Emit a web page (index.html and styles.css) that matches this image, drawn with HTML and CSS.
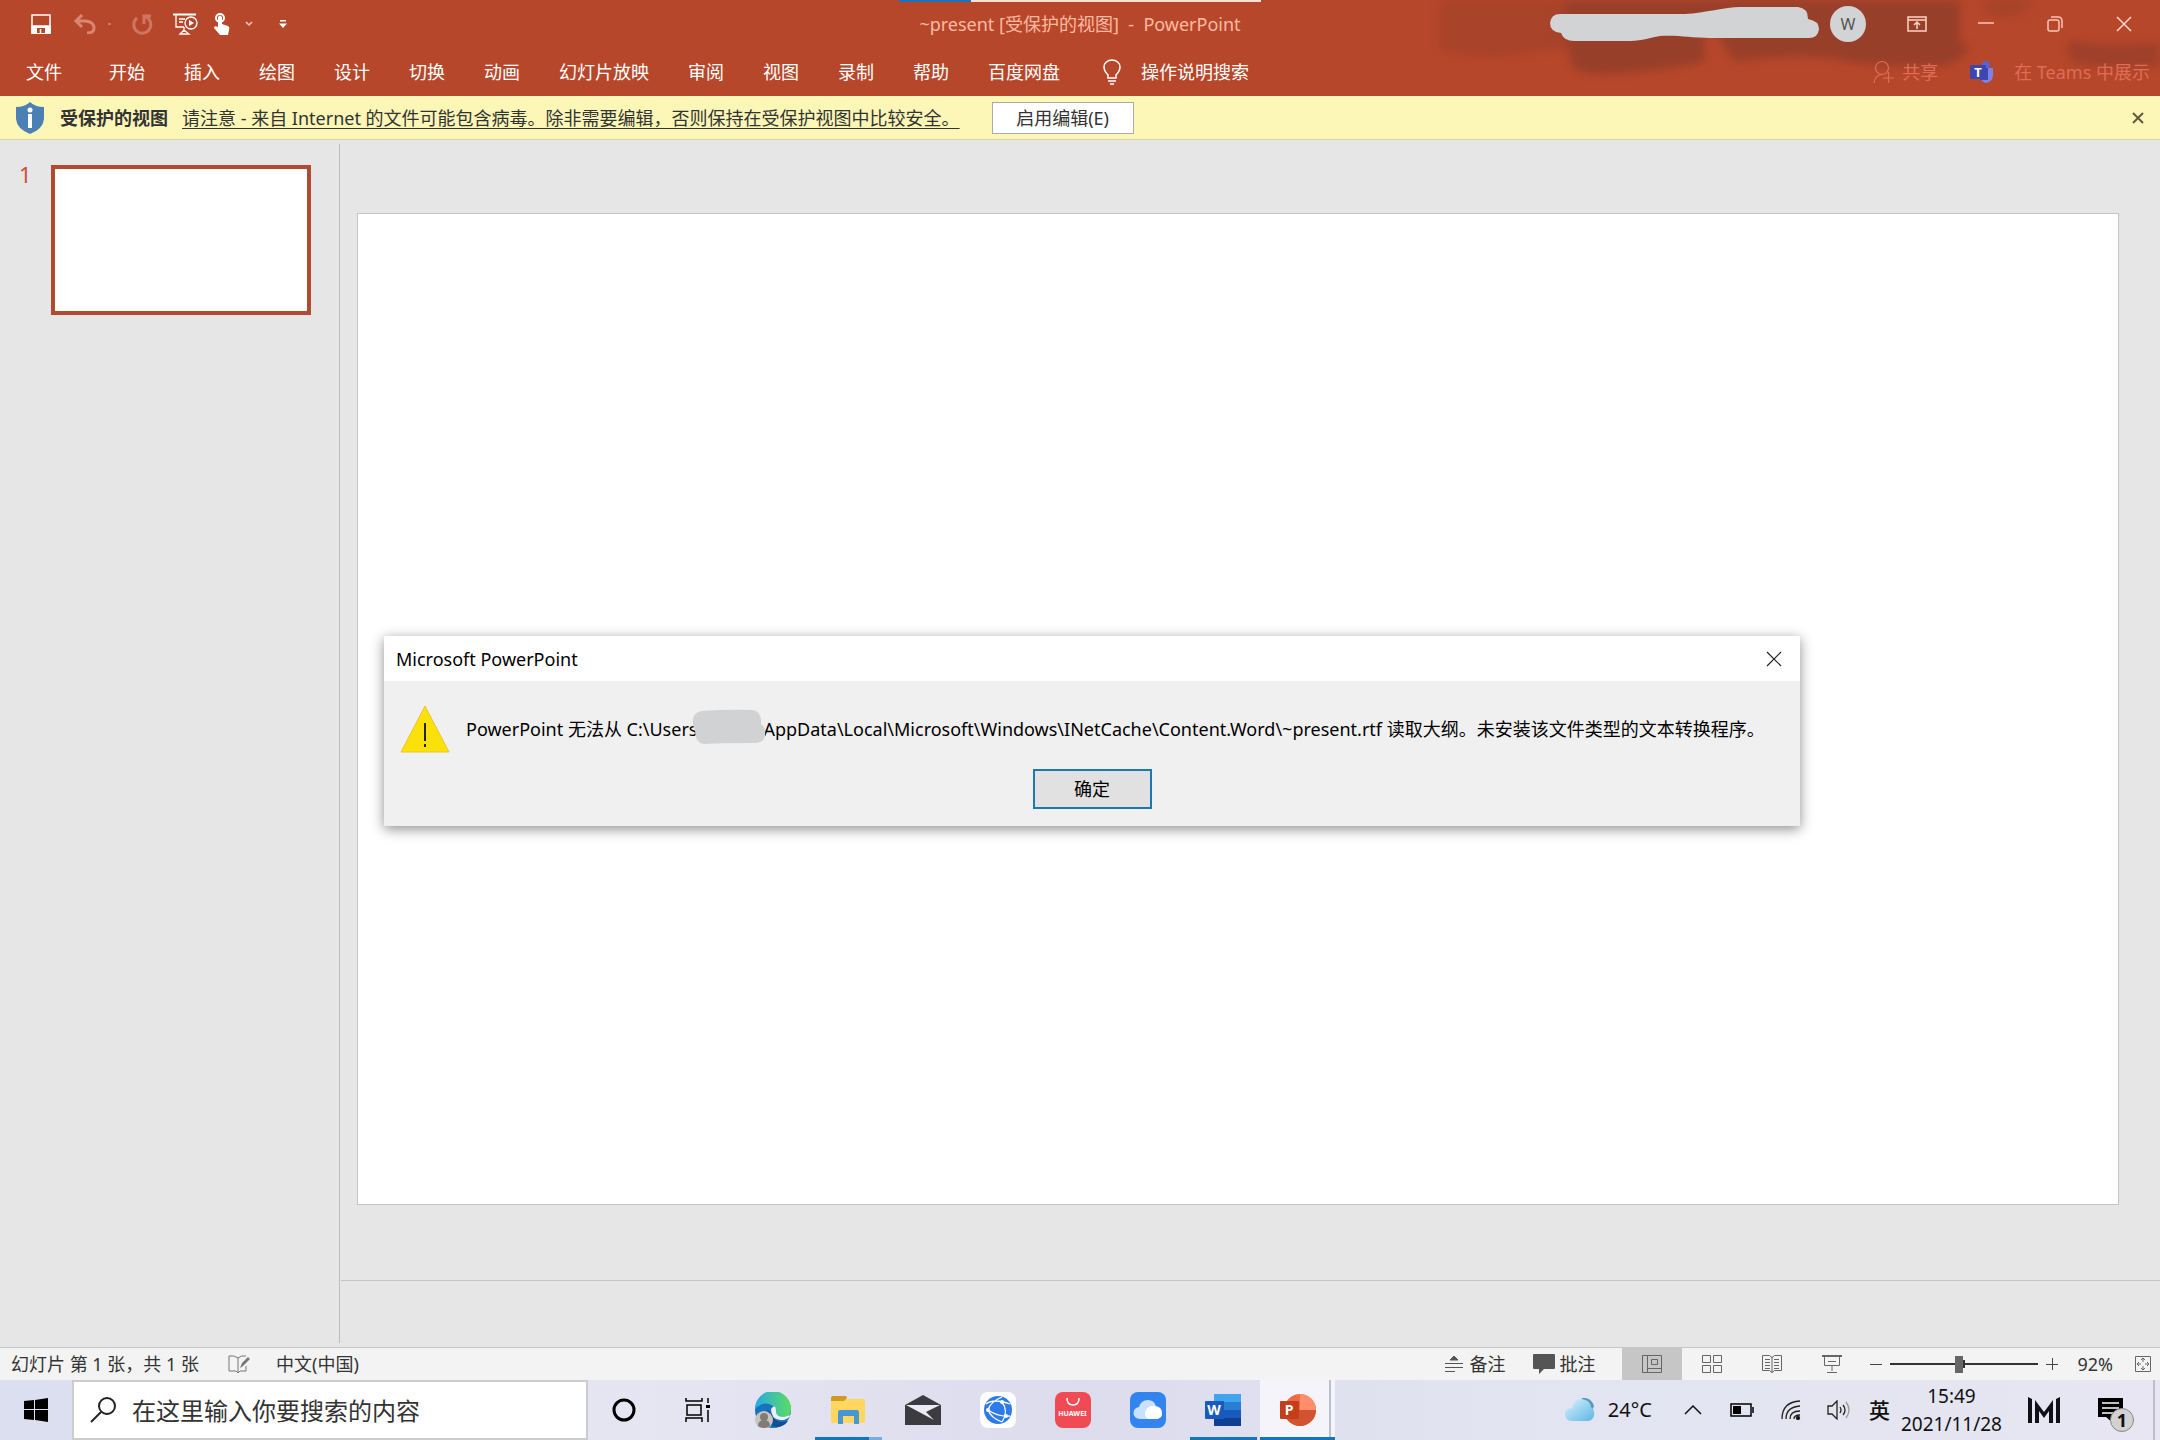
FILE: index.html
```
<!DOCTYPE html>
<html lang="zh-CN">
<head>
    <meta charset="UTF-8">
    <meta name="viewport" content="width=device-width, initial-scale=1.0">
    <title>~present [受保护的视图] - PowerPoint</title>
    <link rel="stylesheet" href="styles.css">
</head>
<body>
    <header class="ribbon">
        <svg class="ribbon-art" width="720" height="96" viewBox="0 0 720 96" aria-hidden="true">
            <g fill="#983f2a">
                <path d="M0 0h105v50q-60 15-105 0z" opacity="0.45"/>
                <path d="M105 0h30v50h-30z" opacity="0.5"/>
                <path d="M125 0h140v62q-50 10-95 12-35 2-40-12z"/>
                <path d="M255 0h265v42q12 4 8 8-13 18-38 16-60 2-100-8-50-4-95 4z"/>
                <path d="M540 0h55l-15 16h-30z" opacity="0.5"/>
                <path d="M630 40q35 8 90 2v24q-50 4-85-3-12-10-5-23z" opacity="0.8"/>
            </g>
        </svg>
        <div class="top-strip"><span></span></div>
        <div class="titlebar">
            <div class="quick">
                <button class="save" aria-label="保存"><svg width="20" height="20" viewBox="0 0 20 20" fill="none" stroke="#fff" stroke-width="1.500"><path d="M1 1h18v18H1z"/><path d="M1 12h18v7H1z" fill="#fff"/><path d="M6 14h8v5H6z" fill="#b7472a" stroke="none"/><path d="M9.500 15v4"/></svg></button>
                <button class="undo" aria-label="撤销"><svg width="24" height="20" viewBox="0 0 24 20" fill="none" stroke="#d98672" stroke-width="3"><path d="M9 1L3 7l6 6M3 7h10q8 1 8 7 0 5-7 5"/></svg></button>
                <i class="dot"></i>
                <button class="redo" aria-label="恢复"><svg width="22" height="22" viewBox="0 0 22 22" fill="none" stroke="#d07562" stroke-width="3"><path d="M6 5a8.500 8.500 0 1 0 9-1M13 11V3h7"/></svg></button>
                <button class="play" aria-label="从头开始"><svg width="25" height="22" viewBox="0 0 25 22" fill="none" stroke="#fff" stroke-width="1.300"><path d="M0 1.500h23" stroke-width="2"/><path d="M3 2v12h8M6 6h6M6 9h4M11 14v5M7 21l4-4 5 4z"/><circle cx="18" cy="10" r="6"/><path d="M16 7l5 3-5 3z" fill="#fff" stroke="none"/></svg></button>
                <button class="touch" aria-label="触摸模式"><svg width="17" height="22" viewBox="0 0 17 22"><circle cx="7" cy="5" r="4" fill="none" stroke="#fff" stroke-width="2"/><path d="M5 4q2-3 4 0v7l6 2q2 1 1 4l-1 5H7l-6-7q0-3 4-1z" fill="#fff"/></svg></button>
                <button class="chev" aria-label="模式选项"><svg width="8" height="6" viewBox="0 0 8 6" fill="none" stroke="#ffc9b6" stroke-width="1.500"><path d="M1 1l3 3 3-3"/></svg></button>
                <button class="more" aria-label="自定义快速访问工具栏"><svg width="8" height="8" viewBox="0 0 8 8" fill="#fff"><path d="M1 0h6v1.500H1zM0 3.500h8L4 8z"/></svg></button>
            </div>
            <h1>~present [受保护的视图]&nbsp; -&nbsp; PowerPoint</h1>
            <div class="window-tools">
                <svg class="account" width="270" height="34" viewBox="0 0 270 34" aria-hidden="true"><path d="M10 7h125c20-1 40-7 55-7h58q10 1 10 12 11 2 11 10-1 9-10 9H160c-20 0-30-3-50-2-15 3-20 5-35 5H24q-10 0-13-8Q0 25 0 16q1-9 10-9z" fill="#d2d3d5"/></svg>
                <span class="avatar">W</span>
                <button aria-label="功能区显示选项"><svg width="20" height="16" viewBox="0 0 20 16" fill="none" stroke="#ffd3c6" stroke-width="1.500"><path d="M1 1h18v14H1zM1 4h18M10 13V6M7 9l3-3 3 3"/></svg></button>
                <button aria-label="最小化"><svg width="16" height="16" viewBox="0 0 16 16" stroke="#ffc3b4" stroke-width="1.500"><path d="M0 7h16"/></svg></button>
                <button aria-label="还原"><svg width="16" height="16" viewBox="0 0 16 16" fill="none" stroke="#ffc3b4" stroke-width="1.500"><rect x="1" y="4" width="11" height="11" rx="2"/><path d="M4 1h7q4 0 4 4v7"/></svg></button>
                <button aria-label="关闭"><svg width="16" height="16" viewBox="0 0 16 16" stroke="#ffd3c6" stroke-width="1.500"><path d="M1 1l14 14M15 1L1 15"/></svg></button>
            </div>
        </div>
        <nav class="tabs">
            <a href="#" class="file">文件</a>
            <a href="#">开始</a>
            <a href="#">插入</a>
            <a href="#">绘图</a>
            <a href="#">设计</a>
            <a href="#">切换</a>
            <a href="#">动画</a>
            <a href="#">幻灯片放映</a>
            <a href="#">审阅</a>
            <a href="#">视图</a>
            <a href="#">录制</a>
            <a href="#">帮助</a>
            <a href="#">百度网盘</a>
            <a href="#" class="tell"><svg width="18" height="26" viewBox="0 0 18 26" fill="none" stroke="#fff" stroke-width="1.500"><path d="M5 19v-3Q1 12 1 8a8 7 0 0 1 16 0q0 4-4 8v3zM5 22h8M7 25h4"/></svg>操作说明搜索</a>
            <div class="share">
                <a href="#"><svg width="21" height="24" viewBox="0 0 21 24" fill="none" stroke="#d9705a" stroke-width="1.200"><circle cx="9" cy="8" r="6.500"/><path d="M1 23q1-8 8-8.500M10 18h11M15.500 12v11"/></svg>共享</a>
                <a href="#" class="teams"><svg width="24" height="22" viewBox="0 0 24 22"><circle cx="16" cy="4" r="4" fill="#5b63d3"/><path d="M11 7h12v8q-1 6-7 7-5-1-5-6z" fill="#7b83eb"/><path d="M10 7h8v12h-8z" fill="#4048a8"/><rect y="4" width="16" height="14" rx="1" fill="#3b46b5"/><text x="8" y="16" class="logo-letter" font-size="13">T</text></svg><span>在 Teams 中展示</span></a>
            </div>
        </nav>
    </header>

    <div class="notice">
        <svg class="shield" width="28" height="32" viewBox="0 0 28 32"><path d="M14 0q5 5 14 5v12q-1 10-14 15Q1 27 0 17V5q9 0 14-5z" fill="#4b80b5"/><circle cx="14" cy="8" r="2.500" fill="#fff"/><path d="M14 12v14" stroke="#fff" stroke-width="4"/></svg>
        <strong>受保护的视图</strong>
        <a href="#">请注意 - 来自 Internet 的文件可能包含病毒。除非需要编辑，否则保持在受保护视图中比较安全。</a>
        <button class="enable">启用编辑(E)</button>
        <button class="close" aria-label="关闭消息"><svg width="12" height="12" viewBox="0 0 12 12" stroke="#5e5b40" stroke-width="2"><path d="M1 1l10 10M11 1L1 11"/></svg></button>
    </div>

    <main class="workspace">
        <aside class="thumbs">
            <span>1</span>
            <button class="thumb" aria-label="幻灯片 1"></button>
        </aside>
        <section class="editor">
            <div class="canvas"><div class="slide"></div></div>
            <div class="notes"></div>
        </section>
    </main>

    <div class="dialog" role="dialog" aria-labelledby="dialog-title">
        <div class="dialog-head">
            <h2 id="dialog-title">Microsoft PowerPoint</h2>
            <button aria-label="关闭"><svg width="16" height="16" viewBox="0 0 16 16" stroke="#222" stroke-width="1.200"><path d="M1 1l14 14M15 1L1 15"/></svg></button>
        </div>
        <div class="dialog-body">
            <div class="message">
                <svg width="50" height="48" viewBox="0 0 50 48"><path d="M25 1l24 46H1z" fill="#fbe10a" stroke="#ecc52c"/><path d="M25 18v18M25 39v3" stroke="#222" stroke-width="2"/></svg>
                <p><span>PowerPoint 无法从 C:\Users</span><svg class="redacted" width="74" height="36" viewBox="0 0 74 36" aria-hidden="true"><path d="M10 2q25-2 50-1 10 1 9 14 5 3 4 12-1 7-11 7-30 0-50 1Q3 34 3 22 0 15 1 10q1-7 9-8z" fill="#d0d2d4"/></svg><span>AppData\Local\Microsoft\Windows\INetCache\Content.Word\~present.rtf 读取大纲。未安装该文件类型的文本转换程序。</span></p>
            </div>
            <button class="ok">确定</button>
        </div>
    </div>

    <footer class="status">
        <span>幻灯片 第 1 张，共 1 张</span>
        <svg class="spell" width="22" height="20" viewBox="0 0 22 20" fill="none" stroke="#777"><path d="M10 18V4Q6 1 1 2v15h7l2 2 2-2h6v-5M10 4q3-3 8-2"/><path d="M12 14l2-5 6-6 2 2-7 7z" fill="#777" stroke="none"/></svg>
        <span>中文(中国)</span>
        <div class="status-right">
            <button class="text-button"><svg width="18" height="18" viewBox="0 0 18 18" fill="none" stroke="#555"><path d="M0 8.500h18M0 12.500h18M0 16.500h10"/><path d="M5 5l4-4 4 4z" fill="#555"/></svg>备注</button>
            <button class="text-button comments"><svg width="22" height="20" viewBox="0 0 22 20" fill="#555"><path d="M1 0h20q1 0 1 1v13q0 1-1 1H11l-5 5v-5H1q-1 0-1-1V1q0-1 1-1z"/></svg>批注</button>
            <button class="view active" aria-label="普通视图"><svg width="20" height="18" viewBox="0 0 20 18" fill="none" stroke="#666"><path d="M.5.5h19v17H.5zM5.500.5v17M5.500 13.500h14M9.500 4.500h6v5h-6z"/></svg></button>
            <button class="view" aria-label="幻灯片浏览"><svg width="20" height="18" viewBox="0 0 20 18" fill="none" stroke="#666"><path d="M.5.5h8v7h-8zM11.500.5h8v7h-8zM.5 10.500h8v7h-8zM11.500 10.500h8v7h-8z"/></svg></button>
            <button class="view" aria-label="阅读视图"><svg width="20" height="18" viewBox="0 0 20 18" fill="none" stroke="#666"><path d="M10 2v16M.5.500h7l2.500 2 2.500-2h7v15h-7l-2.500 2-2.500-2h-7zM3 4.500h5M3 7.500h5M3 10.500h5M3 13.500h5M12 4.500h5M12 7.500h5M12 10.500h5M12 13.500h5"/></svg></button>
            <button class="view" aria-label="幻灯片放映"><svg width="20" height="18" viewBox="0 0 20 18" fill="none" stroke="#666"><path d="M0 1h20" stroke-width="2"/><path d="M2.500 1v9.500h15V1M6 6.500h8M10 11v5M5 17.500h10"/></svg></button>
            <div class="zoom">
                <button aria-label="缩小"><svg width="12" height="12" viewBox="0 0 12 12" stroke="#444"><path d="M0 6.500h12"/></svg></button>
                <input type="range" min="0" max="200" value="92" aria-label="缩放级别">
                <button aria-label="放大"><svg width="12" height="12" viewBox="0 0 12 12" stroke="#444"><path d="M0 6.500h12M6.500 0v12"/></svg></button>
            </div>
            <span class="percent">92%</span>
            <button class="fit" aria-label="适应窗口"><svg width="16" height="16" viewBox="0 0 16 16" fill="none" stroke="#666"><path d="M.5.500h15v15H.5zM8 2v4M8 10v4M2 8h4M10 8h4M6 4l2-2 2 2M6 12l2 2 2-2M4 6L2 8l2 2M12 6l2 2-2 2"/></svg></button>
        </div>
    </footer>

    <div class="taskbar">
        <button class="start" aria-label="开始"><svg width="24" height="24" viewBox="0 0 24 24"><path d="M0 3l10-1v9H0zM11 2l13-2v11H11zM0 12h10v10L0 21zM11 12h13v12l-13-2z"/></svg></button>
        <label class="search">
            <svg width="26" height="26" viewBox="0 0 26 26" fill="none" stroke="#222" stroke-width="2"><circle cx="17" cy="9" r="8"/><path d="M11 15L1 25"/></svg>
            <input type="text" placeholder="在这里输入你要搜索的内容" aria-label="搜索">
        </label>
        <div class="apps">
            <button class="cortana" aria-label="Cortana"><svg width="26" height="26" viewBox="0 0 26 26"><circle cx="13" cy="13" r="10" fill="none" stroke="#000" stroke-width="3"/></svg></button>
            <button aria-label="任务视图"><svg width="26" height="24" viewBox="0 0 26 24" fill="none" stroke="#000" stroke-width="1.500"><path d="M1 0v3h16V0M1 24v-4h16v4M2 7h14v10H2zM23 0v5M23 12v12"/><path d="M21 7h4v3h-4z" fill="#000" stroke="none"/></svg></button>
            <button aria-label="Edge"><svg width="36" height="36" viewBox="0 0 36 36"><defs><linearGradient id="edge-a" x1="0" x2="1"><stop stop-color="#28a9e5"/><stop offset="1" stop-color="#5bdc62"/></linearGradient></defs><circle cx="18" cy="18" r="18" fill="#1673bd"/><path d="M0 17A18 18 0 0 1 36 17q0 10-10 10-9 0-7-5 4-4-1-8Q9 8 0 17z" fill="url(#edge-a)"/><path d="M12 18q-2 14 9 17 8 0 12-6-13 4-16-7z" fill="#114f91"/><path d="M16 17q5-6 5 3 0 5 8 5l7-2q-4 6-11 5-9-1-9-11z" fill="#eef"/><circle cx="9" cy="28" r="9" fill="#c8c5c0"/><circle cx="9" cy="25" r="4" fill="#817b76"/><path d="M3 34q0-6 6-6t6 6q-6 4-12 0z" fill="#817b76"/></svg></button>
            <button class="open grouped" aria-label="文件资源管理器"><svg width="34" height="28" viewBox="0 0 34 28"><path d="M2 3h30q2 0 2 2v20q0 2-2 2H2q-2 0-2-2V3z" fill="#ffd65f"/><path d="M0 2q0-2 2-2h13l1 2-3 3H0z" fill="#d29a24"/><path d="M7 16q0-2 2-2h17q2 0 2 2v12h-5v-8H12v8H7z" fill="#4798d2"/></svg></button>
            <button aria-label="邮件"><svg width="36" height="30" viewBox="0 0 36 30" fill="#3b3b40"><path d="M0 10L18 0l18 10v20H0z"/><path d="M1 10h34l-14 7 8 8L1 10z" fill="#eceaf5"/></svg></button>
            <button aria-label="浏览器"><svg width="36" height="36" viewBox="0 0 36 36"><rect width="36" height="36" rx="8" fill="#fff"/><circle cx="18" cy="18" r="14" fill="#2d7be8"/><path d="M22 5Q10 10 8 18 11 26 22 30M8 18q10 7 22 6M22 10q7 9 0 20M6 12q8-6 24 0" fill="none" stroke="#fff" stroke-width="1.300"/><circle cx="8" cy="18" r="2" fill="#fff"/><circle cx="22" cy="10" r="2" fill="#fff"/><circle cx="26" cy="24" r="2" fill="#fff"/></svg></button>
            <button aria-label="华为商城"><span class="huawei"><svg width="14" height="8" viewBox="0 0 14 8" fill="none" stroke="#fff" stroke-width="1.500"><path d="M1 0q0 7 6 7t6-7"/></svg><small>HUAWEI</small></span></button>
            <button aria-label="云空间"><svg width="36" height="36" viewBox="0 0 36 36"><rect width="36" height="36" rx="8" fill="#3384ef"/><path d="M10 27a6 6 0 0 1-1-12q2-7 9-7 6 0 8 6 6 1 6 7t-7 6z" fill="#c9e0ff"/><path d="M18 27a6 6 0 0 1-2-9q2-4 7-4 9 1 9 7t-7 6z" fill="#fff"/></svg></button>
            <button class="open" aria-label="Word"><svg width="36" height="32" viewBox="0 0 36 32"><path d="M9 0h27v8H9z" fill="#41a5ee"/><path d="M9 8h27v8H9z" fill="#2b7cd3"/><path d="M9 16h27v8H9z" fill="#185abd"/><path d="M9 24h27v8H9z" fill="#103f91"/><rect y="7" width="19" height="18" rx="1" fill="#185abd"/><text x="9" y="21" class="logo-letter" font-size="14">W</text></svg></button>
            <button class="open current" aria-label="PowerPoint"><svg width="36" height="32" viewBox="0 0 36 32"><circle cx="20" cy="16" r="16" fill="#ed6c47"/><path d="M20 0a16 16 0 0 1 16 16H20z" fill="#ff8f6b"/><path d="M4 16h32a16 16 0 0 1-32 0z" fill="#d35230"/><rect y="7" width="19" height="18" rx="1" fill="#c43e1c"/><text x="9" y="21" class="logo-letter" font-size="14">P</text></svg></button>
        </div>
        <div class="tray">
            <button class="weather"><svg width="30" height="24" viewBox="0 0 30 24"><defs><linearGradient id="sky" x1="0" y1="0" x2="1" y2="1"><stop stop-color="#d8f4ff"/><stop offset="1" stop-color="#5fb4e4"/></linearGradient></defs><path d="M17 0q9-1 12 8l-3 7-12-8z" fill="#5798bb"/><path d="M6 23q-6-1-6-7t7-6q2-9 10-9 8 1 9 8 4 3 3 8-1 6-7 6z" fill="url(#sky)"/></svg>24°C</button>
            <button class="up" aria-label="显示隐藏的图标"><svg width="18" height="10" viewBox="0 0 18 10" fill="none" stroke="#111" stroke-width="1.500"><path d="M1 9l8-8 8 8"/></svg></button>
            <svg class="battery" width="24" height="14" viewBox="0 0 24 14" fill="none" stroke="#000" stroke-width="1.500"><path d="M1 1h20v12H1zM23 4v6"/><path d="M3 3h8v8H3z" fill="#000" stroke="none"/></svg>
            <svg class="wifi" width="20" height="20" viewBox="0 0 20 20" fill="none" stroke="#222" stroke-width="1.300"><path d="M1 19Q1 2 19 1M5 19Q5 7 19 6M9 19Q9 11 19 11M13 19q0-4 6-4"/><circle cx="17" cy="18" r="1.500" fill="#000"/></svg>
            <svg class="volume" width="24" height="20" viewBox="0 0 24 20" fill="none" stroke="#222" stroke-width="1.300"><path d="M1 6h4l5-5v18l-5-5H1zM13 7q2 3 0 6M16 5q4 5 0 10"/><path d="M19 2q6 8 0 16" stroke="#999"/></svg>
            <span class="ime">英</span>
            <time datetime="2021-11-28T15:49">15:49<br>2021/11/28</time>
            <svg class="m-logo" width="32" height="26" viewBox="0 0 32 26"><path d="M0 0l4 2v24H0zM28 2l4-2v26h-4zM7 3l9 12 9-12v23h-4V14l-5 7-5-7v12H7z" fill="#101018"/></svg>
            <button class="messages" aria-label="通知"><svg width="25" height="25" viewBox="0 0 25 25"><path d="M0 0h25v19H15v6l-7-6H0z"/><path d="M4 5h17M4 10h17M4 15h11" stroke="#fff" stroke-width="1.500"/></svg><b>1</b></button>
        </div>
    </div>
</body>
</html>
```
FILE: styles.css
```
* {
    box-sizing: border-box;
}
body {
    margin: 0;
    min-height: 100vh;
    display: flex;
    flex-direction: column;
    font-family: "Noto Sans", "Noto Sans CJK SC", sans-serif;
    font-size: 18px;
    line-height: 24px;
    color: #333;
    background-color: #e6e6e6;
}
button {
    display: flex;
    align-items: center;
    justify-content: center;
    padding: 0;
    border: none;
    background: none;
    font: inherit;
    color: inherit;
    cursor: pointer;
}
svg {
    display: block;
    flex-shrink: 0;
}
a {
    color: inherit;
    text-decoration: none;
    white-space: nowrap;
}
h1, h2, p {
    margin: 0;
    font-size: 18px;
    font-weight: normal;
    white-space: nowrap;
}
.logo-letter {
    fill: #fff;
    font-weight: bold;
    text-anchor: middle;
}

/* title bar and tabs */
.ribbon {
    position: relative;
    height: 96px;
    color: #fff;
    background-color: #b7472a;
}
.ribbon-art {
    position: absolute;
    top: 0;
    right: 0;
    filter: blur(4px);
}
.top-strip {
    position: absolute;
    top: 0;
    left: 0;
    right: 0;
    display: flex;
    justify-content: center;
}
.top-strip span {
    width: 362px;
    height: 2px;
    background: linear-gradient(to right, #1f72b8 20%, #f8e0da 20%);
}
.titlebar {
    position: relative;
    height: 48px;
    display: grid;
    grid-template-columns: 1fr auto 1fr;
    align-items: center;
}
.titlebar h1 {
    color: #ffb9a3;
}
.quick {
    display: flex;
    align-items: center;
    padding-left: 31px;
}
.undo {
    margin-left: 22px;
}
.dot {
    width: 3px;
    height: 2px;
    margin: 0 20px 0 11px;
    background-color: #cf7862;
}
.play {
    margin-left: 20px;
}
.touch {
    margin-left: 15px;
}
.chev {
    margin-left: 15px;
}
.more {
    margin-left: 26px;
}
.window-tools {
    display: flex;
    align-items: center;
    justify-content: flex-end;
    padding-right: 2px;
}
.window-tools button {
    width: 69px;
    height: 46px;
}
.avatar {
    width: 36px;
    height: 36px;
    margin: 0 16px 0 10px;
    border-radius: 50%;
    background-color: #d2d3d5;
    color: #555;
    font-size: 16px;
    line-height: 36px;
    text-align: center;
}
.tabs {
    position: relative;
    display: flex;
    align-items: center;
    gap: 39px;
    height: 48px;
    padding: 0 10px 0 26px;
}
.file {
    margin-right: 8px;
}
.tell, .share, .share a {
    display: flex;
    align-items: center;
}
.tell {
    gap: 20px;
    margin-left: 4px;
}
.share {
    gap: 32px;
    margin-left: auto;
    color: #de6d57;
}
.share a {
    gap: 8px;
}
.share .teams {
    gap: 20px;
}

/* protected view message */
.notice {
    display: flex;
    align-items: center;
    height: 44px;
    padding: 0 16px;
    border-bottom: 1px solid #d8d4a4;
    background-color: #fcf7b6;
}
.notice strong {
    margin: 0 14px 0 16px;
}
.notice a {
    text-decoration: underline;
    text-underline-offset: 3px;
}
.enable {
    width: 142px;
    height: 32px;
    margin-left: 32px;
    border: 1px solid #ababab;
    background-color: #fff;
}
.notice .close {
    margin-left: auto;
}

/* slide list and editor */
.workspace {
    flex: 1;
    display: flex;
    padding: 4px 0;
}
.thumbs {
    width: 340px;
    display: flex;
    align-items: flex-start;
    padding: 21px 28px 0 19px;
    border-right: 1px solid #bcbcbc;
    color: #c8503a;
    font-size: 22px;
}
.thumbs span {
    width: 32px;
    line-height: 18px;
}
.thumb {
    flex: 1;
    height: 150px;
    border: 4px solid #b04a32;
    background-color: #fff;
}
.editor {
    flex: 1;
    display: flex;
    flex-direction: column;
    padding-left: 1px;
}
.canvas {
    flex: 1;
    display: flex;
    padding: 69px 41px 75px 16px;
    border-bottom: 1px solid #c4c4c4;
}
.slide {
    flex: 1;
    border: 1px solid #c4c4c4;
    background-color: #fff;
}
.notes {
    height: 62px;
}

/* message box floating over the slide */
.dialog {
    position: absolute;
    left: 384px;
    top: 636px;
    width: 1416px;
    background-color: #f0f0f0;
    box-shadow: 0 3px 12px rgba(0, 0, 0, 0.45);
    color: #000;
}
.dialog-head {
    display: flex;
    align-items: center;
    justify-content: space-between;
    height: 45px;
    padding: 0 18px 0 12px;
    background-color: #fff;
}
.dialog-body {
    display: flex;
    flex-direction: column;
    align-items: center;
    gap: 16px;
    padding: 24px 16px 17px;
}
.message, .message p {
    display: flex;
    align-items: center;
}
.message {
    align-self: flex-start;
    gap: 16px;
}
.redacted {
    position: relative;
    margin: -12px -3px -8px -5px;
}
.ok {
    width: 119px;
    height: 40px;
    border: 2px solid #1b78b0;
    background-color: #e1e1e1;
}

/* status bar */
.status {
    display: flex;
    align-items: center;
    height: 33px;
    padding-left: 11px;
    border-top: 1px solid #c6c6c6;
    background-color: #f3f3f3;
    white-space: nowrap;
}
.spell {
    margin: 0 26px 0 29px;
}
.status-right {
    display: flex;
    align-items: center;
    margin-left: auto;
    padding-right: 9px;
}
.text-button {
    gap: 6px;
}
.comments {
    gap: 4px;
    margin: 0 27px 0 28px;
}
.view {
    width: 60px;
    height: 32px;
}
.view.active {
    background-color: #c6c6c6;
}
.zoom {
    display: flex;
    align-items: center;
    gap: 8px;
    margin-left: 8px;
}
.zoom input {
    appearance: none;
    width: 148px;
    height: 16px;
    margin: 0;
    background: linear-gradient(#333, #333) center / 100% 2px no-repeat, linear-gradient(#333, #333) center / 2px 8px no-repeat;
}
.zoom input::-webkit-slider-thumb {
    appearance: none;
    width: 8px;
    height: 17px;
    background-color: #666;
}
.percent {
    margin: 0 22px 0 19px;
}

/* taskbar */
.taskbar {
    display: flex;
    height: 60px;
    background: linear-gradient(to right, #dcdff0, #e6e5f2 30%, #dddced 50%, #e2e4f1 70%, #e7e6f2);
    color: #111;
}
.start {
    width: 72px;
}
.search {
    display: flex;
    align-items: center;
    gap: 16px;
    width: 516px;
    padding-left: 16px;
    border: 2px solid #ccc;
    background-color: #fff;
}
.search input {
    flex: 1;
    min-width: 0;
    border: none;
    outline: none;
    padding: 0;
    font: inherit;
    font-size: 24px;
}
.search input::placeholder {
    color: #333;
    opacity: 1;
}
.apps {
    display: flex;
}
.apps button {
    width: 75px;
    border-bottom: 3px solid transparent;
    padding-top: 2px;
}
.apps .cortana {
    width: 72px;
}
.apps .open {
    border-image: linear-gradient(to right, transparent 8px, #1176bc 8px, #1176bc 69px, transparent 69px) 3;
}
.apps .grouped {
    border-image: linear-gradient(to right, transparent 8px, #1176bc 8px, #1176bc 57px, #78addb 57px, #78addb 69px, transparent 69px) 3;
}
.apps .current {
    background: linear-gradient(to right, #f4f4fa 69px, #bfbfcc 69px, #bfbfcc 71px, #f4f4fa 71px);
    border-image: linear-gradient(#1176bc, #1176bc) 3;
}
.huawei {
    display: flex;
    flex-direction: column;
    align-items: center;
    gap: 3px;
    width: 36px;
    height: 36px;
    padding-top: 6px;
    border-radius: 8px;
    background-color: #f04a55;
    color: #fff;
}
.huawei small {
    font-size: 7px;
    line-height: 10px;
    font-weight: bold;
}
.tray {
    display: flex;
    align-items: center;
    margin-left: auto;
    margin-right: 5px;
    padding-right: 30px;
    border-right: 2px solid #bdbdcb;
}
.weather {
    gap: 13px;
    font-size: 20px;
}
.up {
    margin: 0 28px 0 32px;
}
.wifi {
    margin: 0 26px 0 27px;
}
.ime {
    margin: 0 11px 0 18px;
    font-size: 21px;
    font-weight: 500;
}
.tray time {
    font-size: 19px;
    line-height: 28px;
    text-align: center;
}
.m-logo {
    margin: 0 38px 0 26px;
}
.messages {
    position: relative;
}
.messages b {
    position: absolute;
    left: 12px;
    top: 10px;
    width: 24px;
    height: 24px;
    border: 1px solid #888;
    border-radius: 50%;
    background-color: #d2d2d2;
    font-size: 18px;
    line-height: 22px;
}
```
